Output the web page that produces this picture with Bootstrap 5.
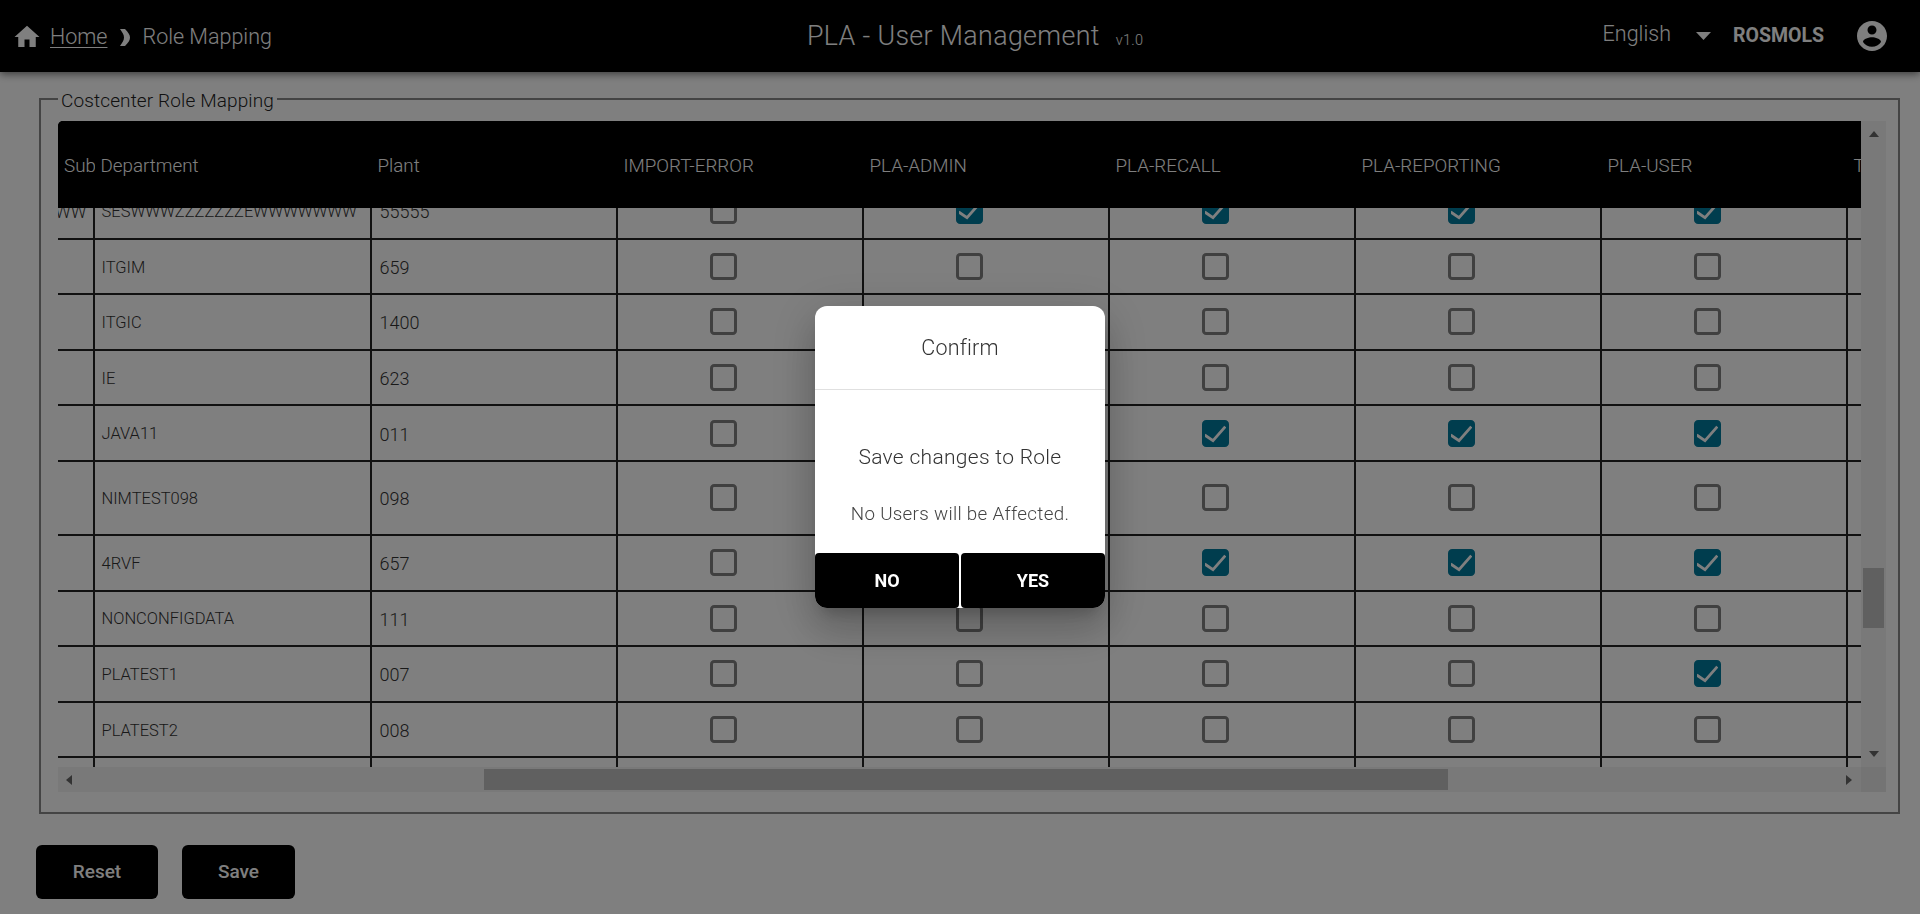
<!DOCTYPE html>
<html lang="en">
<head>
<meta charset="utf-8">
<title>PLA - User Management</title>
<link href="https://cdn.jsdelivr.net/npm/bootstrap@5.3.0/dist/css/bootstrap.min.css" rel="stylesheet">
<style>
html,body{height:914px;overflow:hidden;background:#fff}
body{font-family:Roboto,"Liberation Sans",sans-serif;font-weight:300;color:#333}
.top-bar{height:72px;background:#000;color:#fff;box-shadow:0 2px 8px rgba(0,0,0,.55);padding:0;position:relative;flex-wrap:nowrap;justify-content:flex-start}
.crumbs{flex:0 0 807px;padding:2px 0 0 12px;font-size:21.5px;gap:0}
.crumbs svg{flex:none}
.crumbs a{color:#fff;margin-left:8px;text-decoration-thickness:1px;text-underline-offset:3px}
.crumbs .sep{margin:0 12px 0 13px}
.app-title{font-size:26.8px;letter-spacing:.35px;white-space:nowrap}
.app-ver{font-size:14.5px;margin-left:16px;letter-spacing:.3px}
.user-zone{margin-left:auto;padding-right:30px}
.lang{font-size:21.5px;margin-top:-4px}
.user-caret{margin-left:25px}
.user-name{font-size:19.5px;font-weight:700;margin:0 30px 0 22px}
.user-zone svg{display:block}
.work{padding:16px 20px 0 36px}
.map-box{height:726px;border:2px solid #888;margin:0 0 0 3px;padding:0 12px 20px 17px;min-width:0}
.map-box legend{float:none;width:auto;font-size:19px;line-height:18px;padding:4px 3px 0;margin:0 0 11px 0;letter-spacing:.12px;color:#222}
.grid-shell{display:grid;grid-template-columns:1fr 25px;grid-template-rows:1fr 25px;height:671px}
.grid-view{overflow:hidden;min-width:0;min-height:0;display:flex;flex-direction:column}
.head-table,.body-table{table-layout:fixed;width:1900px;border-collapse:separate;border-spacing:0;margin:0}
.head-wrap{flex:none;background:#000;height:87px;border-top-left-radius:5px;overflow:hidden}
.head-table th{background:#000;color:#fff;font-weight:300;font-size:18.8px;height:87px;padding:3px 6px 0;border:0;white-space:nowrap;overflow:hidden;vertical-align:middle}
.body-wrap{flex:1;overflow:hidden;min-height:0}
.body-table{margin-top:-24px}
.body-table td{background:transparent;color:#333;font-size:16.5px;font-weight:300;height:55.6px;padding:3px 6px 0 7px;border:0;border-right:2px solid #222;border-bottom:2px solid #222;vertical-align:middle;white-space:nowrap;overflow:hidden;box-shadow:none}
.body-table td.num-cell{font-size:18px;padding-left:8px;padding-top:2px}
.body-table tr.tall td{height:74px}
.body-table td.sub-cell{text-align:right;padding-right:8px;padding-left:0;direction:rtl;font-size:17.5px}
.body-table td.mid{padding:0 0 0 92px}
.body-table td:last-child{border-right:0}
.w0{width:36.5px}.w1{width:277px}.w2{width:246px}
.tick{display:block;width:27px;height:27px;margin:0;border:3px solid #808080;border-radius:4px;background-color:transparent}
.tick:checked{background-color:#007a9c;border-color:#007a9c;background-origin:border-box;background-size:27px 27px;background-image:url("data:image/svg+xml,%3csvg xmlns='http://www.w3.org/2000/svg' viewBox='0 0 27 27'%3e%3cpath fill='none' stroke='%23fff' stroke-width='2.800' d='M2.700 15L11 20.700 23.300 6.700'/%3e%3c/svg%3e")}
.track{background:#f2f2f2;display:flex;align-items:center}
.track-y{flex-direction:column;justify-content:space-between;padding:10px 0 10px;position:relative}
.track-x{justify-content:space-between;padding:0 9px 0 8px;position:relative}
.thumb{background:#c1c1c1;position:absolute}
.thumb-y{left:2px;right:2px;top:447px;height:60px}
.thumb-x{top:2px;bottom:2px;left:426px;width:964px}
.corner{background:#e8e8e8}
.tri-u,.tri-d{width:0;height:0;border-left:5.5px solid transparent;border-right:5.5px solid transparent}
.tri-u{border-bottom:6px solid #666}.tri-d{border-top:6px solid #666}
.tri-l,.tri-r{width:0;height:0;border-top:5.5px solid transparent;border-bottom:5.5px solid transparent}
.tri-l{border-right:6px solid #666}.tri-r{border-left:6px solid #666}
.foot-btns{gap:24px;padding:31px 0 0 0}
.act-btn{background:#000;color:#fff;border:0;height:54px;border-radius:6px;font-family:Roboto,"Liberation Sans",sans-serif;font-size:19px;font-weight:500}
.act-reset{width:122px}.act-save{width:113px}
.dlg-wrap{position:fixed;left:815px;top:306px;width:290px;height:302px;z-index:1060;background:#fff;border-radius:12px;display:flex;flex-direction:column;box-shadow:0 11px 15px -7px rgba(0,0,0,.2),0 24px 38px 3px rgba(0,0,0,.14),0 9px 46px 8px rgba(0,0,0,.12);color:#333}
.dlg-head{height:84px;font-size:21.5px;padding-top:2px;border-bottom:1px solid #e0e0e0;flex:none;letter-spacing:.2px}
.dlg-body{flex:1;text-align:center;padding-top:53px}
.dlg-main{font-size:21px;line-height:28px;letter-spacing:.3px;margin:0 0 31px}
.dlg-sub{font-size:18.8px;line-height:24px;letter-spacing:.3px;margin:0;color:#444;white-space:nowrap}
.dlg-btns{gap:2px;flex:none}
.dlg-btn{flex:1;height:55px;background:#000;color:#fff;border:0;font-family:Roboto,"Liberation Sans",sans-serif;font-size:18px;font-weight:700;border-radius:4px 4px 12px 12px}
.dlg-btn:first-child{border-bottom-right-radius:4px}
.dlg-btn:last-child{border-bottom-left-radius:4px}
</style>
</head>
<body>
<nav class="navbar top-bar d-flex align-items-center">
  <div class="crumbs d-flex align-items-center">
    <svg width="30" height="30" viewBox="0 0 24 24" fill="#fff"><path d="M10 20v-6h4v6h5v-8h3L12 3 2 12h3v8z"/></svg>
    <a href="#">Home</a>
    <svg class="sep" width="10" height="17" viewBox="0 0 10 17" fill="#fff"><path d="M0 0h5C8.500 3.500 10 6 10 8.500S8.500 13.500 5 17H0c2-3 4-5.500 4-8.500S2 3 0 0z"/></svg>
    <span>Role Mapping</span>
  </div>
  <div class="app-title">PLA - User Management<span class="app-ver">v1.0</span></div>
  <div class="user-zone d-flex align-items-center">
    <span class="lang">English</span>
    <svg class="user-caret" width="15" height="8" viewBox="0 0 15 8" fill="#fff"><path d="M0 0h15L7.500 8z"/></svg>
    <span class="user-name">ROSMOLS</span>
    <svg width="36" height="36" viewBox="0 0 24 24" fill="#fff"><path d="M12 2C6.480 2 2 6.480 2 12s4.480 10 10 10 10-4.480 10-10S17.520 2 12 2zm0 3c1.660 0 3 1.340 3 3s-1.340 3-3 3-3-1.340-3-3 1.340-3 3-3zm0 14.200c-2.500 0-4.710-1.280-6-3.220.030-1.990 4-3.080 6-3.080 1.990 0 5.970 1.090 6 3.080-1.290 1.940-3.500 3.220-6 3.220z"/></svg>
  </div>
</nav>

<main class="work">
  <fieldset class="map-box">
    <legend>Costcenter Role Mapping</legend>
    <div class="grid-shell">
      <div class="grid-view">
        <div class="head-wrap">
          <table class="head-table">
            <colgroup><col class="w0"><col class="w1"><col class="w2"><col class="w2"><col class="w2"><col class="w2"><col class="w2"><col class="w2"><col class="w2"></colgroup>
            <thead><tr><th>Sub</th><th>Department</th><th>Plant</th><th>IMPORT-ERROR</th><th>PLA-ADMIN</th><th>PLA-RECALL</th><th>PLA-REPORTING</th><th>PLA-USER</th><th>T</th></tr></thead>
          </table>
        </div>
        <div class="body-wrap">
          <table class="table body-table">
            <colgroup><col class="w0"><col class="w1"><col class="w2"><col class="w2"><col class="w2"><col class="w2"><col class="w2"><col class="w2"><col class="w2"></colgroup>
            <tbody id="rows"></tbody>
          </table>
        </div>
      </div>
      <div class="track track-y"><span class="tri-u"></span><span class="thumb thumb-y"></span><span class="tri-d"></span></div>
      <div class="track track-x"><span class="tri-l"></span><span class="thumb thumb-x"></span><span class="tri-r"></span></div>
      <div class="corner"></div>
    </div>
  </fieldset>
  <div class="foot-btns d-flex">
    <button class="btn act-btn act-reset" type="button">Reset</button>
    <button class="btn act-btn act-save" type="button">Save</button>
  </div>
</main>

<div class="modal-backdrop fade show"></div>
<div class="dlg-wrap" role="dialog">
  <div class="dlg-head d-flex align-items-center justify-content-center">Confirm</div>
  <div class="dlg-body">
    <p class="dlg-main">Save changes to Role</p>
    <p class="dlg-sub">No Users will be Affected.</p>
  </div>
  <div class="dlg-btns d-flex">
    <button class="dlg-btn" type="button">NO</button>
    <button class="dlg-btn" type="button">YES</button>
  </div>
</div>

<script src="https://cdn.jsdelivr.net/npm/bootstrap@5.3.0/dist/js/bootstrap.bundle.min.js"></script>
<script>
var data=[
 ["WWWWW","SESWWWZZZZZZZEWWWWWWW","55555",[0,1,1,1,1]],
 ["","ITGIM","659",[0,0,0,0,0]],
 ["","ITGIC","1400",[0,0,0,0,0]],
 ["","IE","623",[0,0,0,0,0]],
 ["","JAVA11","011",[0,0,1,1,1]],
 ["","NIMTEST098","098",[0,0,0,0,0],1],
 ["","4RVF","657",[0,0,1,1,1]],
 ["","NONCONFIGDATA","111",[0,0,0,0,0]],
 ["","PLATEST1","007",[0,0,0,0,1]],
 ["","PLATEST2","008",[0,0,0,0,0]],
 ["","","",null]
];
var h="";
data.forEach(function(r){
  h+='<tr'+(r[4]?' class="tall"':'')+'><td class="sub-cell">'+r[0]+'</td><td>'+r[1]+'</td><td class="num-cell">'+r[2]+'</td>';
  for(var i=0;i<5;i++){
    h+='<td class="mid">'+(r[3]?'<input class="form-check-input tick" type="checkbox"'+(r[3][i]?' checked':'')+'>':'')+'</td>';
  }
  h+='<td></td></tr>';
});
document.getElementById("rows").innerHTML=h;
</script>
</body>
</html>
